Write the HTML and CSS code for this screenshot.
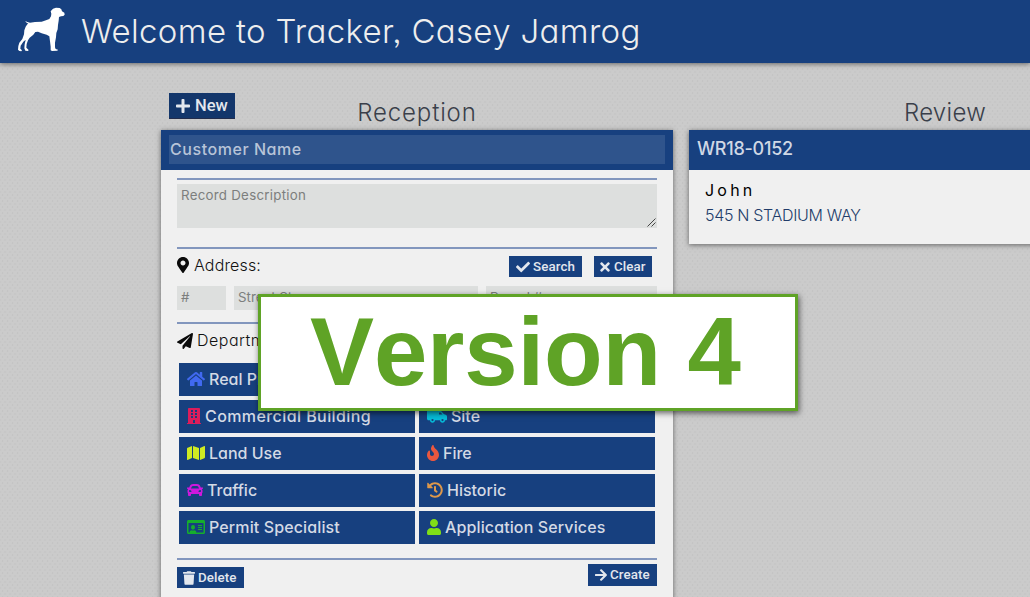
FILE: index.html
```html
<!DOCTYPE html>
<html lang="en">
<head>
<meta charset="utf-8">
<title>Tracker</title>
<link rel="stylesheet" href="styles.css">
</head>
<body>
<header class="topbar">
  <svg class="logo" viewBox="0 0 195 195"><path d="M122 34 129 26 138 23 149 24 154 28 156 34 163 38 164 44 160 48 153 49 147 51 146 62 144 75 143 88 139 99 138 112 135 128 135 142 137 147 144 149 142 152 126 153 122 151 122 140 120 124 118 109 110 104 95 100 84 95 76 96 70 104 59 113 54 121 50 132 49 143 56 150 54 153 46 152 43 145 44 133 47 119 40 125 32 137 31 146 36 151 34 154 28 153 24 149 25 138 28 128 37 117 42 103 43 91 47 80 52 73 55 71 48 67 46 63 52 66 60 68 75 66 95 65 108 61 118 57 123 49 124 41Z"/></svg>
  <h1 class="welcome">Welcome to Tracker, Casey Jamrog</h1>
</header>
<main class="board">
  <section class="column">
    <div class="column-head">
      <button class="new"><svg class="ic" viewBox="0 0 448 512" width="14" height="16"><path d="M416 208H272V64c0-17.670-14.330-32-32-32h-32c-17.670 0-32 14.330-32 32v144H32c-17.670 0-32 14.330-32 32v32c0 17.670 14.330 32 32 32h144v144c0 17.670 14.330 32 32 32h32c17.670 0 32-14.330 32-32V304h144c17.670 0 32-14.330 32-32v-32c0-17.670-14.330-32-32-32z"/></svg><span>New</span></button>
      <h2 class="column-title reception">Reception</h2>
    </div>
    <article class="card form-card">
      <div class="card-head form-head"><div class="customer">Customer Name</div></div>
      <div class="form">
        <div class="group describe"><div class="area"><span>Record Description</span><svg class="grip" viewBox="0 0 9 9"><path d="M.5 8.500 8.500.5M4.500 8.500l4-4"/></svg></div></div>
        <div class="group address">
          <div class="row">
            <svg class="ic dark" viewBox="0 0 384 512" width="12" height="16"><path d="M172.268 501.670C26.970 291.031 0 269.413 0 192 0 85.961 85.961 0 192 0s192 85.961 192 192c0 77.413-26.970 99.031-172.268 309.670-9.535 13.774-29.930 13.773-39.464 0zM192 272c44.183 0 80-35.817 80-80s-35.817-80-80-80-80 35.817-80 80 35.817 80 80 80z"/></svg>
            <span class="label address-label">Address:</span>
            <button class="small search"><svg class="ic" viewBox="0 0 512 512" width="14" height="14"><path d="M173.898 439.404l-166.400-166.400c-9.997-9.997-9.997-26.206 0-36.204l36.203-36.204c9.997-9.998 26.207-9.998 36.204 0L192 312.690 432.095 72.596c9.997-9.997 26.207-9.997 36.204 0l36.203 36.204c9.997 9.997 9.997 26.206 0 36.204l-294.400 294.401c-9.998 9.997-26.207 9.997-36.204-.001z"/></svg><span>Search</span></button>
            <button class="small clear"><svg class="ic" viewBox="0 0 352 512" width="10" height="14"><path d="M242.720 256l100.070-100.070c12.280-12.280 12.280-32.190 0-44.480l-22.240-22.240c-12.280-12.280-32.190-12.280-44.480 0L176 189.280 75.930 89.210c-12.280-12.280-32.190-12.280-44.480 0L9.210 111.450c-12.280 12.280-12.280 32.190 0 44.480L109.280 256 9.210 356.070c-12.280 12.280-12.280 32.190 0 44.480l22.240 22.240c12.280 12.280 32.200 12.280 44.480 0L176 322.720l100.070 100.070c12.280 12.280 32.200 12.280 44.480 0l22.240-22.240c12.280-12.280 12.280-32.190 0-44.480L242.720 256z"/></svg><span>Clear</span></button>
          </div>
          <div class="fields"><div class="field">#</div><div class="field">Street Stem</div><div class="field">Parcel #</div></div>
        </div>
        <div class="group departments">
          <div class="row">
            <svg class="ic dark" viewBox="0 0 512 512" width="16" height="16"><path d="M476 3.200L12.500 270.600c-18.100 10.400-15.800 35.600 2.200 43.200L121 358.400l287.300-253.200c5.500-4.900 13.300 2.600 8.600 8.300L176 407v80.500c0 23.600 28.500 32.900 42.500 15.800L282 426l124.600 52.200c14.200 6 30.400-2.900 33-18.200l72-432C515 7.800 493.300-6.800 476 3.200z"/></svg>
            <span class="label dept-label">Departments:</span>
          </div>
          <div class="dept-grid">
            <div class="dept"><svg class="ic blue" viewBox="0 0 576 512" width="18" height="16"><path d="M280.370 148.260L96 300.110V464a16 16 0 0 0 16 16l112.060-.290a16 16 0 0 0 15.920-16V368a16 16 0 0 1 16-16h64a16 16 0 0 1 16 16v95.640a16 16 0 0 0 16 16.050L464 480a16 16 0 0 0 16-16V300L295.670 148.260a12.190 12.190 0 0 0-15.300 0zM571.600 251.470L488 182.560V44.050a12 12 0 0 0-12-12h-56a12 12 0 0 0-12 12v72.610L318.470 43a48 48 0 0 0-61 0L4.340 251.470a12 12 0 0 0-1.600 16.900l25.500 31A12 12 0 0 0 45.150 301l235.220-193.740a12.190 12.190 0 0 1 15.300 0L530.900 301a12 12 0 0 0 16.900-1.600l25.500-31a12 12 0 0 0-1.700-16.930z"/></svg><span class="property">Real Property</span></div>
            <div class="dept"></div>
            <div class="dept"><svg class="ic crimson" viewBox="0 0 448 512" width="14" height="16"><path fill-rule="evenodd" d="M436 480h-20V24c0-13.255-10.745-24-24-24H56C42.745 0 32 10.745 32 24v456H12c-6.627 0-12 5.373-12 12v20h448v-20c0-6.627-5.373-12-12-12zM128 76c0-6.627 5.373-12 12-12h40c6.627 0 12 5.373 12 12v40c0 6.627-5.373 12-12 12h-40c-6.627 0-12-5.373-12-12zm0 96c0-6.627 5.373-12 12-12h40c6.627 0 12 5.373 12 12v40c0 6.627-5.373 12-12 12h-40c-6.627 0-12-5.373-12-12zm52 148h-40c-6.627 0-12-5.373-12-12v-40c0-6.627 5.373-12 12-12h40c6.627 0 12 5.373 12 12v40c0 6.627-5.373 12-12 12zm76 160h-64v-84c0-6.627 5.373-12 12-12h40c6.627 0 12 5.373 12 12zm64-172c0 6.627-5.373 12-12 12h-40c-6.627 0-12-5.373-12-12v-40c0-6.627 5.373-12 12-12h40c6.627 0 12 5.373 12 12zm0-96c0 6.627-5.373 12-12 12h-40c-6.627 0-12-5.373-12-12v-40c0-6.627 5.373-12 12-12h40c6.627 0 12 5.373 12 12zm0-96c0 6.627-5.373 12-12 12h-40c-6.627 0-12-5.373-12-12V76c0-6.627 5.373-12 12-12h40c6.627 0 12 5.373 12 12z"/></svg><span class="commercial">Commercial Building</span></div>
            <div class="dept"><svg class="ic cyan" viewBox="0 0 640 512" width="20" height="16"><path fill-rule="evenodd" d="M0 112c0-26 22-48 48-48h256c26 0 48 22 48 48v-16h78c14 0 26 5 35 14l81 87c45 5 94 27 94 75v92c0 13-10 24-24 24h-40c0 44-36 80-80 80s-80-36-80-80H256c0 44-36 80-80 80s-80-36-80-80H48c-26 0-48-22-48-48zm384 32v64h112l-58-64zM176 420a36 36 0 1 0 0-72 36 36 0 1 0 0 72m320 0a36 36 0 1 0 0-72 36 36 0 1 0 0 72"/></svg><span>Site</span></div>
            <div class="dept"><svg class="ic lime" viewBox="0 0 576 512" width="18" height="16"><path d="M0 117.660v346.320c0 11.320 11.430 19.060 21.940 14.860L160 416V32L20.120 87.950A32.006 32.006 0 0 0 0 117.660zM192 416l192 64V96L192 32v384zM554.060 33.160L416 96v384l139.880-55.950A31.996 31.996 0 0 0 576 394.340V48.020c0-11.320-11.430-19.060-21.940-14.860z"/></svg><span class="land">Land Use</span></div>
            <div class="dept"><svg class="ic red" viewBox="0 0 384 512" width="12" height="16"><path d="M216 23.860c0-23.800-30.650-32.770-44.150-13.040C48 191.850 224 200 224 288c0 35.630-29.110 64.460-64.850 63.990-35.170-.450-63.150-29.770-63.150-64.940v-85.510c0-21.700-26.470-32.230-41.430-16.500C27.800 213.160 0 261.330 0 320c0 105.870 86.130 192 192 192s192-86.130 192-192c0-170.290-168-193-168-296.140z"/></svg><span class="fire">Fire</span></div>
            <div class="dept"><svg class="ic magenta" viewBox="0 0 512 512" width="16" height="16"><path d="M499.990 176h-59.870l-16.640-41.600C406.380 91.630 365.570 64 319.500 64h-127c-46.060 0-86.880 27.630-103.990 70.400L71.870 176H12.010C4.200 176-1.530 183.340.37 190.910l6 24C7.700 220.250 12.500 224 18.010 224h20.070C24.650 235.730 16 252.780 16 272v48c0 16.120 6.160 30.670 16 41.930V416c0 17.670 14.330 32 32 32h32c17.670 0 32-14.330 32-32v-32h256v32c0 17.670 14.330 32 32 32h32c17.670 0 32-14.330 32-32v-54.070c9.840-11.250 16-25.800 16-41.930v-48c0-19.220-8.650-36.270-22.070-48H494c5.510 0 10.310-3.750 11.640-9.090l6-24c1.890-7.570-3.840-14.910-11.650-14.910zm-352.060-17.830c7.290-18.220 24.940-30.170 44.570-30.170h127c19.630 0 37.280 11.950 44.570 30.170L384 208H128l19.930-49.830zM96 319.800c-19.200 0-32-12.760-32-31.900S76.800 256 96 256s48 28.710 48 47.850-28.800 15.950-48 15.950zm320 0c-19.200 0-48 3.190-48-15.950S396.800 256 416 256s32 12.760 32 31.900-12.800 31.900-32 31.900z"/></svg><span class="traffic">Traffic</span></div>
            <div class="dept"><svg class="ic orange" viewBox="0 0 512 512" width="16" height="16"><path d="M504 255.531c.253 136.640-111.180 248.372-247.820 248.468-59.015.042-113.223-20.530-155.822-54.911-11.077-8.940-11.905-25.541-1.839-35.607l11.267-11.267c8.609-8.609 22.353-9.551 31.891-1.984C173.062 425.135 212.781 440 256 440c101.705 0 184-82.311 184-184 0-101.705-82.311-184-184-184-48.814 0-93.149 18.969-126.068 49.932l50.754 50.754c10.080 10.080 2.941 27.314-11.313 27.314H24c-8.837 0-16-7.163-16-16V38.627c0-14.254 17.234-21.393 27.314-11.314l49.372 49.372C129.209 34.136 189.552 8 256 8c136.810 0 247.747 110.780 248 247.531zm-180.912 78.784l9.823-12.630c8.138-10.463 6.253-25.542-4.210-33.679L288 256.349V152c0-13.255-10.745-24-24-24h-16c-13.255 0-24 10.745-24 24v135.651l65.409 50.874c10.463 8.137 25.541 6.253 33.679-4.210z"/></svg><span class="historic">Historic</span></div>
            <div class="dept"><svg class="ic green" viewBox="0 0 576 512" width="18" height="16"><path fill-rule="evenodd" d="M48 32h480c26.500 0 48 21.500 48 48v352c0 26.500-21.500 48-48 48H48c-26.500 0-48-21.500-48-48V80c0-26.500 21.500-48 48-48m0 96v298c0 3 3 6 6 6h33c-3-46 15-69 63-74 22 12 60 12 82 0 48 5 66 28 63 74h227c3 0 6-3 6-6V128zm144 64a64 74 0 1 0 0 148 64 74 0 1 0 0-148m160 0h128v32H352zm0 64h128v32H352zm0 64h128v32H352z"/></svg><span class="permit">Permit Specialist</span></div>
            <div class="dept"><svg class="ic lawn" viewBox="0 0 448 512" width="14" height="16"><path d="M224 256c70.700 0 128-57.300 128-128S294.700 0 224 0 96 57.300 96 128s57.300 128 128 128zm89.600 32h-16.700c-22.200 10.200-46.900 16-72.900 16s-50.600-5.800-72.900-16h-16.700C60.200 288 0 348.200 0 422.400V464c0 26.500 21.500 48 48 48h352c26.500 0 48-21.500 48-48v-41.600c0-74.200-60.200-134.400-134.400-134.400z"/></svg><span class="services">Application Services</span></div>
          </div>
        </div>
        <div class="group actions">
          <button class="small delete"><svg class="ic" viewBox="0 0 448 512" width="12" height="14"><path d="M432 32H312l-9.400-18.700A24 24 0 0 0 281.100 0H166.800a23.720 23.720 0 0 0-21.400 13.300L136 32H16A16 16 0 0 0 0 48v32a16 16 0 0 0 16 16h416a16 16 0 0 0 16-16V48a16 16 0 0 0-16-16zM53.200 467a48 48 0 0 0 47.900 45h245.800a48 48 0 0 0 47.900-45L416 128H32z"/></svg><span>Delete</span></button>
          <button class="small create"><svg class="ic" viewBox="0 0 448 512" width="12" height="14"><path d="M190.500 66.900l22.200-22.200c9.400-9.400 24.600-9.400 33.900 0L441 239c9.400 9.400 9.400 24.600 0 33.900L246.600 467.300c-9.400 9.400-24.600 9.400-33.900 0l-22.200-22.200c-9.500-9.500-9.300-25 .4-34.300L311.400 296H24c-13.300 0-24-10.700-24-24v-32c0-13.300 10.700-24 24-24h287.400L190.900 101.200c-9.800-9.300-10-24.800-.4-34.300z"/></svg><span>Create</span></button>
        </div>
      </div>
    </article>
  </section>
  <section class="column">
    <div class="column-head"><h2 class="column-title review">Review</h2></div>
    <article class="card">
      <div class="card-head record-id"><span>WR18-0152</span></div>
      <div class="record"><div class="person">John</div><div class="street">545 N STADIUM WAY</div></div>
    </article>
  </section>
</main>
<div class="version">Version 4</div>
</body>
</html>
```
FILE: styles.css
```css
* { box-sizing: border-box; }
body {
  margin: 0;
  width: 1030px;
  height: 597px;
  overflow: hidden;
  position: relative;
  font-family: Inter, "Open Sans", sans-serif;
  font-feature-settings: "cv11", "ss03";
  font-size: 16px;
  background-color: #cbcbcb;
  background-image:
    radial-gradient(circle, #c4c4c4 0.8px, transparent 1.2px),
    radial-gradient(circle, #c4c4c4 0.8px, transparent 1.2px);
  background-size: 5px 6px;
  background-position: 0 0, 2.500px 3px;
}
h1, h2 { margin: 0; font-weight: 400; white-space: nowrap; }
button { border: 0; padding: 0; display: flex; align-items: center; color: #e3e7ee; background: #17407f; font-family: Roboto, sans-serif; }
.ic { flex: none; fill: currentColor; display: block; }
.topbar { position: relative; height: 63px; display: flex; align-items: center; padding-left: 10px; background: #17407f; box-shadow: 0 1px 5px rgba(0,0,0,.5); }
.logo { width: 65px; height: 65px; margin-top: 2px; fill: #fff; }
.welcome { margin-left: 6px; margin-top: -1px; font-size: 33px; line-height: 48px; font-weight: 360; color: #eee; letter-spacing: .34px; }
.board { display: flex; gap: 16px; padding: 30px 0 0 161px; }
.column { flex: 0 0 512px; }
.column-head { height: 37px; display: grid; grid-template-columns: 66px 1fr 66px; padding: 0 8px; }
.column-title { grid-column: 2; justify-self: center; font-size: 24px; line-height: 40px; font-weight: 300; color: #3a3f4a; letter-spacing: .3px; }
.reception { letter-spacing: .85px; }
.new { height: 26px; padding: 0 7px; gap: 5px; font-size: 16.500px; font-weight: 500; background: #13366b; border-bottom: 1px solid #222c4c; }
.card { background: #f0f0f0; box-shadow: 0 1px 5px rgba(0,0,0,.5); }
.form-card { height: 480px; }
.card-head { height: 40px; background: #17407f; }
.form-head { padding: 5px 8px 6px; }
.customer { height: 29px; line-height: 29px; padding-left: 1px; background: #2f548c; color: #b8c4d8; font-weight: 500; letter-spacing: .55px; }
.form { padding: 8px 16px; }
.group { border-top: 2px solid #8296bd; }
.describe { height: 69px; padding-top: 4px; }
.area { height: 44px; display: flex; justify-content: space-between; padding: 2px 0 0 4px; background: #dddfde; color: #7c7e7d; font-size: 13.300px; line-height: 18px; letter-spacing: .27px; }
.grip { align-self: flex-end; width: 9px; height: 9px; fill: none; stroke: #444; stroke-width: 1; margin: 0 1px 1px 0; }
.address { height: 75px; padding-top: 7px; }
.row { display: flex; align-items: center; height: 21px; }
.dark { color: #0a0a0a; }
.label { font-weight: 350; color: #111; margin-left: 5px; line-height: 21px; }
.address .row { padding-right: 5px; }
.address-label { flex: 1; margin-top: -2px; letter-spacing: .15px; }
.address .dark { margin-top: -3px; }
.dept-label { margin-left: 4px; letter-spacing: .5px; }
.small { height: 21px; font-size: 13.330px; font-weight: 500; letter-spacing: .1px; }
.search { width: 73px; padding-left: 7px; gap: 3px; margin-right: 12px; }
.clear { width: 58px; padding-left: 6px; gap: 4px; }
.fields { display: grid; grid-template-columns: 49px 244px 171px; gap: 8px; margin-top: 9px; }
.field { height: 24px; line-height: 23px; padding-left: 4px; background: #dddfde; color: #7c7e7d; font-size: 13.300px; }
.departments { height: 236px; padding-top: 6px; }
.dept-grid { display: grid; grid-template-columns: 236px 236px; grid-auto-rows: 33px; gap: 4px; padding: 12px 2px 0; }
.dept { display: flex; align-items: center; gap: 4px; padding: 0 0 1px 8px; background: #17407f; color: #d4dae5; font-weight: 500; }
.commercial { letter-spacing: .42px; }
.permit, .services { letter-spacing: .12px; }
.blue { color: #4169f0; }
.crimson { color: #dc1d5b; }
.cyan { color: #06bcd9; }
.lime { color: #cfeb22; }
.red { color: #ea573f; }
.magenta { color: #cd18dd; }
.orange { color: #de984a; }
.green { color: #16ae2c; }
.lawn { color: #80df17; }
.actions { display: flex; justify-content: space-between; padding-top: 4px; }
.delete { width: 67px; padding-left: 6px; gap: 3px; margin-top: 3px; }
.create { width: 69px; height: 22px; padding: 0 0 1px 7px; gap: 3px; }
.record-id { padding-left: 8px; line-height: 38px; font-size: 18px; font-weight: 500; color: #d0d8e5; letter-spacing: -.25px; }
.record { height: 74px; padding: 8px 16px; line-height: 25px; }
.person { letter-spacing: 3.200px; color: #000; }
.street { font-weight: 350; color: #213c69; letter-spacing: -.32px; }
.version { position: absolute; left: 258px; top: 294px; width: 540px; height: 117px; border: 3px solid #5fa326; background: #fff; box-shadow: 1px 2px 6px rgba(0,0,0,.6); color: #5fa326; font: bold 96px/110px "Liberation Sans", Arial, sans-serif; font-kerning: none; letter-spacing: -.15px; padding-left: 49px; white-space: nowrap; }
```
